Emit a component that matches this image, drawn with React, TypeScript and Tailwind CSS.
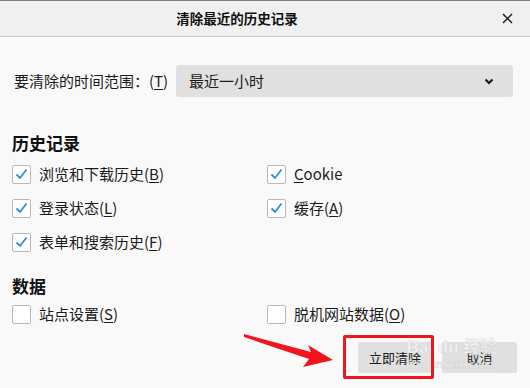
const font = { fontFamily: '"Noto Sans CJK SC", "Noto Sans", sans-serif' };

function Check({ checked }: { checked: boolean }) {
  return (
    <div className="w-[19px] h-[19px] shrink-0 rounded-[2px] border border-[#b8b8b8] bg-white flex items-center justify-center">
      {checked && (
        <svg width="13" height="12" viewBox="0 0 13 12">
          <path d="M1.5 6.5 L5 10 L11.5 1.5" fill="none" stroke="#2b8ddc" strokeWidth="1.8" />
        </svg>
      )}
    </div>
  );
}

function Acc({ k }: { k: string }) {
  return (
    <>
      (<span className="underline underline-offset-2">{k}</span>)
    </>
  );
}

function Row({ checked, children }: { checked: boolean; children: React.ReactNode }) {
  return (
    <div className="h-[34px] flex items-center gap-[8px] text-[15px] text-[#1b1b1b]">
      <Check checked={checked} />
      <span>{children}</span>
    </div>
  );
}

export default function App() {
  return (
    <div
      className="w-[530px] h-[388px] bg-[#f9f9f9] border-t border-[#7d7d7d] relative overflow-hidden"
      style={font}
    >
      <div className="h-[36px] bg-[#f0f0f0] border-b border-[#c6c6c6] flex items-center">
        <div className="flex-1 text-center text-[13.5px] font-bold text-[#111]">清除最近的历史记录</div>
        <div className="w-[56px] flex justify-end pr-[17px]">
          <svg width="11" height="11" viewBox="0 0 11 11">
            <path d="M1 1 L10 10 M10 1 L1 10" stroke="#222" strokeWidth="1.5" />
          </svg>
        </div>
      </div>

      <div className="px-[12px]">
        <div className="mt-[28px] h-[32px] flex items-center">
          <div className="w-[164px] pl-[2px] text-[15px] text-[#1b1b1b]">
            要清除的时间范围：<Acc k="T" />
          </div>
          <div className="w-[337px] h-[32px] bg-[#e0e0e0] rounded-[3px] flex items-center justify-between pl-[13px] pr-[19px] text-[15px] text-[#1b1b1b]">
            <span>最近一小时</span>
            <svg width="10" height="7" viewBox="0 0 10 7">
              <path d="M1.5 1.5 L5 5 L8.5 1.5" fill="none" stroke="#1a1a1a" strokeWidth="2.2" />
            </svg>
          </div>
        </div>

        <div className="mt-[35px] h-[22px] leading-[22px] text-[17px] font-bold text-[#111]">历史记录</div>
        <div className="mt-[3px] grid grid-cols-[255px_1fr]">
          <Row checked>浏览和下载历史<Acc k="B" /></Row>
          <Row checked>
            <span className="underline underline-offset-2">C</span>ookie
          </Row>
          <Row checked>登录状态<Acc k="L" /></Row>
          <Row checked>缓存<Acc k="A" /></Row>
          <Row checked>表单和搜索历史<Acc k="F" /></Row>
          <div />
        </div>

        <div className="mt-[16px] h-[22px] leading-[22px] text-[17px] font-bold text-[#111]">数据</div>
        <div className="grid grid-cols-[255px_1fr]">
          <Row checked={false}>站点设置<Acc k="S" /></Row>
          <Row checked={false}>脱机网站数据<Acc k="O" /></Row>
        </div>

        <div className="mt-[11px] flex justify-end gap-[10px] pr-[1px]">
          <button className="w-[74px] h-[31px] bg-[#e0e0e0] rounded-[2px] text-[13px] text-[#1b1b1b]">立即清除</button>
          <button className="w-[75px] h-[31px] bg-[#e0e0e0] rounded-[2px] text-[13px] text-[#1b1b1b]">取消</button>
        </div>
      </div>

      {/* watermark */}
      <div
        className="absolute left-[400px] top-[337px] w-[104px] flex flex-col items-center whitespace-nowrap pointer-events-none"
        style={{ fontFamily: '"Liberation Sans", "Noto Sans CJK SC", sans-serif' }}
      >
        <div className="text-[17px] leading-[20px] font-bold text-white/70 [-webkit-text-stroke:0.5px_#d4d4d4]">Bai du 经验</div>
        <div className="text-[11px] leading-[13px] text-white/80 [-webkit-text-stroke:0.4px_#cfcfcf]">jingyan.baidu.com</div>
      </div>

      {/* annotation */}
      <div className="absolute left-[343px] top-[334px] w-[91px] h-[44px] border-[3px] border-[#f0141c] rounded-[2px] pointer-events-none" />
      <svg className="absolute left-0 top-0 pointer-events-none" width="530" height="388">
        <polygon
          points="244,333 311,351 308,344 333,359 303,366 309,358 244,336"
          fill="#f0141c"
        />
      </svg>
    </div>
  );
}
